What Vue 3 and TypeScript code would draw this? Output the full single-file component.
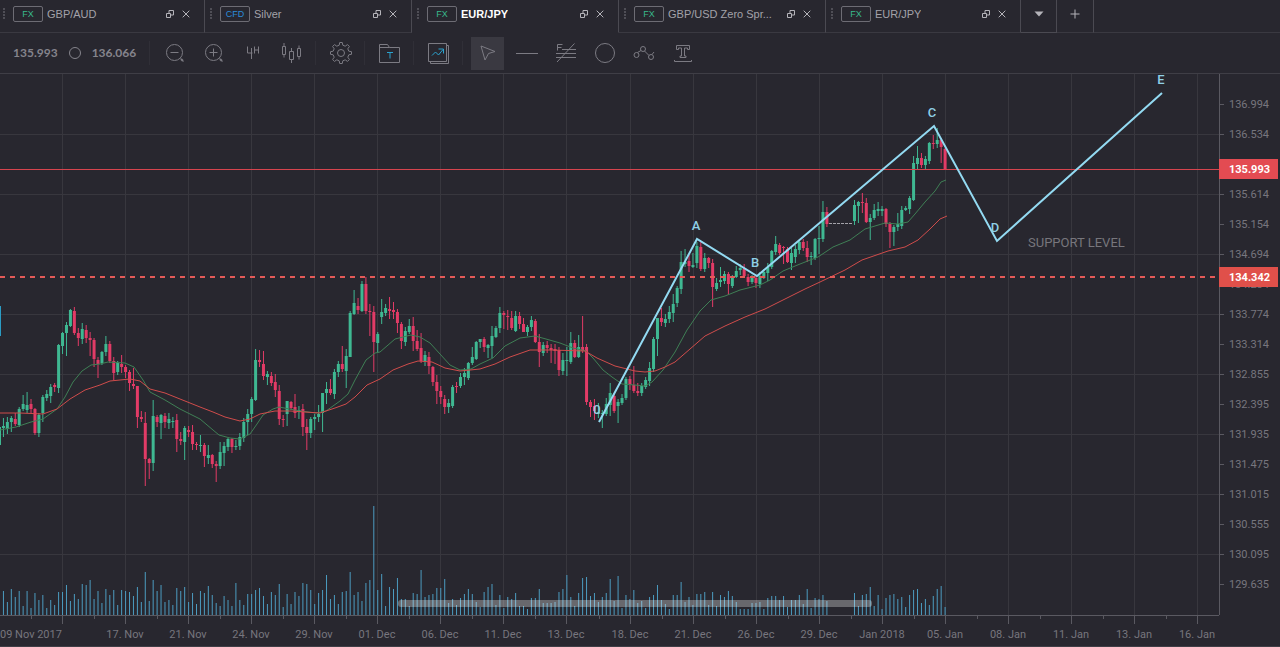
<script setup lang="ts">
import { ref } from 'vue'

interface Tab {
  kind: 'FX' | 'CFD'
  title: string
}

interface Candle {
  x: number
  high: number
  top: number
  bottom: number
  low: number
  up: boolean
}

const tabs: Tab[] = [
  { kind: 'FX', title: 'GBP/AUD' },
  { kind: 'CFD', title: 'Silver' },
  { kind: 'FX', title: 'EUR/JPY' },
  { kind: 'FX', title: 'GBP/USD Zero Spr...' },
  { kind: 'FX', title: 'EUR/JPY' },
]
const activeTab = ref(2)
const activeTool = ref('pointer')

// Distance between two bars of the series, in chart units
const STEP = 3.94
const BASE = 615
const AXIS = 1219

const barX = (i: number): number => i * STEP - 0.5

// One bar per entry: direction, then high, body top, body bottom, low
const firstBars = `G425,427,445,447 G418,426,428,437 G417,422,429,434 G416,418,422,432 R413,419,424,426 G407,409,425,427 G395,404,409,411 G392,405,410,413 R399,404,409,413 R408,409,433,435
G413,415,433,437 G395,397,413,422 G390,394,398,401 G384,387,396,403 R383,385,387,392 G344,345,388,393 G332,333,346,354 G322,325,333,356 G309,310,326,327 R307,311,333,335
R328,333,338,346 G323,329,339,344 R325,330,338,343 R332,338,340,356 R338,340,359,367 R357,360,364,378 G351,352,363,365 G336,344,352,356 R341,344,361,363 R357,361,373,380
G361,363,372,375 R355,364,367,373 R365,367,372,378 R370,372,383,391 R368,384,386,389 R386,386,417,428 R411,417,419,422 R412,423,459,486 R458,459,463,479 G400,416,463,471
R415,417,422,427 G414,415,423,439 R413,416,422,428 G413,419,423,429 G417,421,422,428 R414,420,439,452 R432,439,441,445 G426,428,442,460 R426,430,432,437 R425,432,444,450
R442,444,445,450 G435,445,446,452 R443,445,456,467 G445,455,458,464 R454,455,464,468 R461,464,466,482 G442,452,466,469 G442,446,453,466 G438,439,447,451 R438,439,447,453
G440,446,447,450 G433,437,446,450 G418,422,438,442 G409,414,422,435 G397,399,414,422 G349,360,400,401 R350,360,362,367 R351,364,376,380 G371,374,377,385 R372,376,383,386
R374,382,390,397 R385,391,419,425 R415,419,420,427 G401,401,414,426 R401,402,408,410 R394,407,413,418 G406,410,412,419 R404,409,427,436 R419,427,433,450 G417,419,433,438
G414,417,419,430 G405,414,417,422 G393,393,413,432 G382,389,393,404 R379,389,393,395 G369,372,394,399 G361,364,372,377 R346,364,369,372 G349,356,371,388 G311,313,357,357
G290,303,314,315 R298,306,310,314 G281,284,311,312 R277,284,311,314 R304,311,312,336 R306,312,342,372 G332,334,343,353 G299,312,317,324 G304,308,313,316 R297,309,311,319
R302,310,312,319 R309,312,323,333 R322,324,341,349 G327,331,342,346 G319,326,332,334 R317,326,341,351 R330,341,349,351 R333,348,361,363 G351,355,362,366 R352,357,366,374
R366,367,382,386 R375,382,391,404 R386,391,397,404 R395,399,407,414 G399,403,407,413 G385,387,406,408 R382,386,387,393 G373,377,386,388 G368,373,377,385 G362,363,378,380
G347,357,363,365 G341,342,359,360 G339,339,342,348 R337,339,347,352 G344,345,348,358 G326,336,346,358 G326,328,337,338 G307,313,328,333 R311,313,315,329 R310,316,317,330
R311,318,328,330 G311,316,331,332 R312,316,324,329 R318,324,332,332 G325,327,332,336 G316,320,327,331 R319,321,342,343 R334,342,352,367 G342,345,353,356 R341,345,348,353
R344,348,350,363 R344,349,351,364 R347,350,370,376 G353,360,371,375 G347,360,361,376 G332,343,362,364 R340,343,357,358 G335,347,357,358 R316,347,351,353 R344,347,402,405
R400,402,407,417 R399,406,411,420 G403,412,414,418 G410,413,414,428 G398,404,414,416 G383,393,405,416 R393,396,411,413 G399,402,406,423 G394,398,403,405 G377,379,398,400
R376,379,385,390 R366,385,391,393 R383,391,393,396 G383,386,393,396 G377,380,387,389 G362,368,381,386 G337,339,369,372 G318,318,339,356 R308,318,322,326 G314,319,323,327
G306,312,319,323 G294,304,313,322 G286,288,303,307 G251,262,289,294 G249,262,264,267 R255,261,266,272 G253,265,267,268 G242,246,263,268 R241,247,269,271 G253,258,269,272
R257,258,263,268 R259,263,287,307 G278,283,289,291 G267,280,282,287 G271,274,281,284 R272,274,284,295 G275,278,286,288 G266,271,277,278 G264,268,270,275 R264,269,276,277
R274,277,282,286 G275,278,282,284 R276,278,283,288 G272,276,284,288 G269,272,278,279 G263,267,273,281 G250,251,267,269 G236,244,252,255 R243,245,253,255 R246,247,248,264
R247,249,262,263 G248,253,263,270 G245,249,257,263 G240,242,250,254 R239,242,248,251 R241,248,257,262 G252,256,257,265 G238,239,258,260 G226,238,239,254 G201,212,239,242
R207,212,224,227`

const holidayResume = 217
const lastBars = `G200,205,221,225 G201,202,206,223 R193,202,203,213 R198,203,222,223 G214,218,222,240 G204,210,218,220 G202,209,211,216 G206,209,211,216 R208,209,224,227 R222,224,232,248
G225,227,232,246 G213,224,227,231 G206,210,226,229 G206,208,210,211 G196,198,209,214 G156,163,200,201 G146,158,164,169 R153,158,165,168 G156,159,165,170 G142,143,161,164
R135,143,144,149 G128,140,144,148 R138,140,147,163 R148,149,169,170`

function parseBars(source: string, start: number): Candle[] {
  return source
    .trim()
    .split(/\s+/)
    .map((entry, i) => {
      const [high, top, bottom, low] = entry.slice(1).split(',').map(Number)
      return { x: barX(start + i), high, top, bottom, low, up: entry[0] === 'G' }
    })
}

const candles: Candle[] = [...parseBars(firstBars, 0), ...parseBars(lastBars, holidayResume)]

const volumeFirst: number[] = [
  24, 13, 26, 18, 24, 9, 24, 7, 22, 15, 20, 7, 15, 10, 23, 23, 30, 14, 21, 16, 31, 30, 35, 16, 24, 12, 26, 20, 25, 10,
  25, 24, 23, 19, 28, 13, 43, 14, 35, 24, 30, 13, 15, 10, 27, 24, 28, 13, 22, 11, 24, 22, 29, 20, 12, 9, 19, 15, 9, 32,
  15, 10, 21, 21, 25, 27, 19, 11, 23, 20, 31, 8, 21, 11, 23, 19, 32, 31, 25, 11, 22, 25, 40, 16, 20, 11, 23, 24, 43, 20,
  23, 14, 32, 35, 109, 25, 41, 9, 28, 26, 37, 16, 16, 9, 22, 21, 45, 18, 20, 21, 27, 27, 36, 12, 16, 10, 17, 21, 26, 21,
  13, 8, 23, 28, 31, 10, 20, 7, 18, 16, 22, 9, 9, 6, 17, 17, 26, 12, 12, 12, 13, 23, 26, 40, 18, 9, 22, 37, 38, 19,
  22, 13, 18, 22, 36, 14, 39, 7, 20, 16, 25, 12, 14, 7, 18, 20, 30, 15, 11, 6, 20, 20, 33, 13, 18, 10, 21, 21, 23, 10,
  23, 9, 20, 18, 24, 19, 13, 6, 6, 6, 12, 12, 13, 6, 17, 19, 19, 15, 19, 8, 15, 15, 20, 11, 26, 7, 17, 16, 20, 14,
]
const volumeLast: number[] = [
  22, 9, 20, 21, 28, 9, 20, 6, 17, 20, 21, 16, 18, 8, 20, 25, 26, 12, 16, 10, 19, 26, 29, 8,
]
const volumes = [
  ...volumeFirst.map((h, i) => ({ x: barX(i + 1), h })),
  ...volumeLast.map((h, i) => ({ x: barX(i + holidayResume), h })),
]

const fastAverage =
  '0,430 16,427 31,422 43,419 57,409 65,397 73,382 82,371 91,365 100,364 108,362 125,363 134,367 143,380 150,392 165,400 180,409 200,419 213,430 219,435 230,438 240,439 250,434 257,424 263,415 273,409 279,407 300,411 316,413 326,411 340,401 348,394 355,380 366,360 375,353 380,352 395,339 403,337 411,335 420,337 430,343 440,354 450,365 460,370 471,369 480,364 493,358 505,346 520,338 535,336 546,339 560,343 573,348 586,351 593,358 603,370 612,377 622,384 635,385 645,386 652,382 663,370 675,352 687,330 700,311 711,300 725,296 740,290 760,285 770,280 783,271 800,264 818,257 833,247 850,240 865,229 885,223 898,224 908,222 915,214 925,202 935,191 941,182 946,180'
const slowAverage =
  '0,413 20,413 43,414 57,409 70,399 85,390 100,385 110,381 130,379 140,381 150,389 165,393 180,399 200,407 213,412 225,417 240,421 250,419 260,414 275,411 290,411 320,413 335,408 346,404 355,397 367,385 380,379 393,370 408,364 418,361 432,362 445,368 460,371 480,369 495,364 510,357 530,350 550,350 585,351 597,358 615,366 635,371 645,372 655,371 665,367 675,362 690,349 705,336 725,326 745,317 765,309 785,299 805,289 820,282 845,270 862,260 888,251 905,247 918,240 930,229 940,219 947,216'

const priceLabels = [
  { text: '136.994', y: 104 },
  { text: '136.534', y: 134 },
  { text: '135.614', y: 194 },
  { text: '135.154', y: 224 },
  { text: '134.694', y: 254 },
  { text: '134.234', y: 284 },
  { text: '133.774', y: 314 },
  { text: '133.314', y: 344 },
  { text: '132.855', y: 374 },
  { text: '132.395', y: 404 },
  { text: '131.935', y: 434 },
  { text: '131.475', y: 464 },
  { text: '131.015', y: 494 },
  { text: '130.555', y: 524 },
  { text: '130.095', y: 554 },
  { text: '129.635', y: 584 },
]
const rows = [134, 194, 254, 314, 374, 434, 494, 554]

const dates = [
  '17. Nov', '21. Nov', '24. Nov', '29. Nov', '01. Dec', '06. Dec', '11. Dec', '13. Dec', '18. Dec',
  '21. Dec', '26. Dec', '29. Dec', 'Jan 2018', '05. Jan', '08. Jan', '11. Jan', '13. Jan', '16. Jan',
]
const columnX = (i: number): number => 62 + Math.round(i * 63.06)
const columns = Array.from({ length: 19 }, (_, i) => columnX(i))
const minorTicks = Array.from({ length: 19 }, (_, i) => columnX(i) - 31)

const wave = '599,422 697,239 757,276 934,126 997,241 1162,93'
const waveLabels = [
  { text: '0', x: 597, y: 414 },
  { text: 'A', x: 696, y: 230 },
  { text: 'B', x: 755, y: 267 },
  { text: 'C', x: 932, y: 117 },
  { text: 'D', x: 995, y: 232 },
  { text: 'E', x: 1161, y: 84 },
]
</script>

<template>
  <main class="terminal">
    <header class="tabs">
      <div
        v-for="(tab, i) in tabs"
        :key="i"
        class="tab"
        :class="{ active: i === activeTab, first: i === 0, last: i === tabs.length - 1 }"
      >
        <svg class="grip" width="4" height="12" viewBox="0 0 4 12" aria-hidden="true">
          <path d="M1 1h2M1 4h2M1 7h2M1 10h2" />
        </svg>
        <button class="label" type="button" @click="activeTab = i">
          <span class="badge" :class="{ cfd: tab.kind === 'CFD' }">{{ tab.kind }}</span>
          <span class="title">{{ tab.title }}</span>
        </button>
        <button class="mini" type="button" aria-label="Detach">
          <svg width="8" height="8" viewBox="0 0 8 8"><path d="M.5 3.500h4v4h-4zM3 3V.5h4.500V5H5" /></svg>
        </button>
        <button class="mini" type="button" aria-label="Close">
          <svg width="8" height="8" viewBox="0 0 8 8"><path d="M.7.7l6.600 6.600M7.300.7L.7 7.300" /></svg>
        </button>
      </div>
      <button class="square boxed" type="button" aria-label="All charts">
        <svg width="10" height="6" viewBox="0 0 10 6"><path class="solid" d="M.5.5h9L5 5.500z" /></svg>
      </button>
      <button class="square" type="button" aria-label="Add chart">
        <svg width="10" height="10" viewBox="0 0 10 10"><path d="M5 .5v9M.5 5h9" /></svg>
      </button>
      <div class="rest"></div>
    </header>

    <nav class="toolbar">
      <div class="quote">
        <span>135.993</span>
        <svg width="14" height="14" viewBox="0 0 14 14" aria-hidden="true"><circle cx="7" cy="7" r="5.500" /></svg>
        <span>136.066</span>
      </div>
      <i class="sep"></i>
      <button class="tool" type="button" aria-label="Zoom out">
        <svg width="24" height="24" viewBox="0 0 24 24"><circle cx="11.500" cy="11.500" r="8" /><path d="M7.500 11.500h8M17.500 17.500l3 3" /><path class="thick" d="M18 18l2 2" /></svg>
      </button>
      <button class="tool" type="button" aria-label="Zoom in">
        <svg width="24" height="24" viewBox="0 0 24 24"><circle cx="11.500" cy="11.500" r="8" /><path d="M7.500 11.500h8M11.500 7.500v8M17.500 17.500l3 3" /><path class="thick" d="M18 18l2 2" /></svg>
      </button>
      <button class="tool" type="button" aria-label="4 hour interval">
        <svg width="24" height="24" viewBox="0 0 24 24"><path d="M6.500 5.500v6.500h5M10.500 7v11M13.500 5.500v7M17.500 5.500v7M13.500 9h4" /></svg>
      </button>
      <button class="tool" type="button" aria-label="Chart type">
        <svg width="24" height="24" viewBox="0 0 24 24"><path d="M2.500 5.500h3v8h-3zM4 2v3.500M4 13.500v3M9.500 10.500h4v8h-4zM11.500 7v3.500M11.500 18.500v3.500M17.500 7.500h3v8h-3zM19 4.500v3M19 15.500v3" /></svg>
      </button>
      <i class="sep"></i>
      <button class="tool" type="button" aria-label="Settings">
        <svg width="24" height="24" viewBox="0 0 24 24"><circle cx="12" cy="12" r="3.500" /><path d="M10.200 4.200 10.700 1.500h2.600l.5 2.700 2.400 1 2.300-1.600 1.900 1.900-1.600 2.300 1 2.400 2.700.5v2.600l-2.700.5-1 2.400 1.600 2.300-1.900 1.900-2.300-1.600-2.400 1-.5 2.700h-2.600l-.5-2.700-2.400-1-2.300 1.600-1.900-1.900 1.600-2.300-1-2.400-2.700-.5v-2.600l2.700-.5 1-2.400-1.600-2.300 1.900-1.900 2.300 1.600z" /></svg>
      </button>
      <i class="sep"></i>
      <button class="tool" type="button" aria-label="Templates">
        <svg width="24" height="24" viewBox="0 0 24 24"><path d="M1.500 21.500v-18h8l2 3h10v15zM1.500 6.500h10" /><path class="accent" d="M9 11.500h6M12 11.500v6" /></svg>
      </button>
      <i class="sep"></i>
      <button class="tool" type="button" aria-label="Indicators">
        <svg width="24" height="24" viewBox="0 0 24 24"><path d="M1.500 2.500h18v18h-18zM19.500 4.500h2v18h-18v-2" /><path class="accent" d="M5 14.500l3.500-3.500 3 3 4.500-5.500M11.500 8h5v4.500" /></svg>
      </button>
      <i class="sep"></i>
      <button class="tool" type="button" aria-label="Pointer" :class="{ on: activeTool === 'pointer' }" @click="activeTool = 'pointer'">
        <svg width="24" height="24" viewBox="0 0 24 24"><path d="M5 5l14 5.500-6.500 2-3.500 6.500z" /></svg>
      </button>
      <button class="tool" type="button" aria-label="Line" :class="{ on: activeTool === 'line' }" @click="activeTool = 'line'">
        <svg width="24" height="24" viewBox="0 0 24 24"><path d="M1 12.500h22" /></svg>
      </button>
      <button class="tool" type="button" aria-label="Fibonacci" :class="{ on: activeTool === 'fibonacci' }" @click="activeTool = 'fibonacci'">
        <svg width="24" height="24" viewBox="0 0 24 24"><path d="M3.500 9.500v-6h5M3.500 6.500h4M8 8.500h14M2 12.500h20M2 16.500h20M3 21L20.500 2.500" /></svg>
      </button>
      <button class="tool" type="button" aria-label="Ellipse" :class="{ on: activeTool === 'ellipse' }" @click="activeTool = 'ellipse'">
        <svg width="24" height="24" viewBox="0 0 24 24"><circle cx="12" cy="12" r="9.500" /></svg>
      </button>
      <button class="tool" type="button" aria-label="Elliott wave" :class="{ on: activeTool === 'wave' }" @click="activeTool = 'wave'">
        <svg width="24" height="24" viewBox="0 0 24 24"><circle cx="4.500" cy="14" r="2.500" /><circle cx="11" cy="8" r="2.500" /><circle cx="19" cy="16" r="2.500" /><path d="M5.500 11.500l3.500-2M12.500 10l4.500 4.500M20 13.500l2-2.500" /></svg>
      </button>
      <button class="tool" type="button" aria-label="Text" :class="{ on: activeTool === 'text' }" @click="activeTool = 'text'">
        <svg width="24" height="24" viewBox="0 0 24 24"><path d="M5.500 4.500h13v4h-2v-1.500h-3v8h1.500v1.500h-6v-1.500h1.500V7h-3v1.500h-2zM3.500 19v1.500h17V19" /></svg>
      </button>
    </nav>

    <svg class="chart" viewBox="0 73 1280 574" role="img" aria-label="EUR/JPY 4 hour candlestick chart">
      <g class="grid">
        <path v-for="x in columns" :key="'c' + x" :d="`M${x + 0.5} 74V${BASE}`" />
        <path v-for="y in rows" :key="'r' + y" :d="`M0 ${y + 0.5}H${AXIS}`" />
      </g>
      <path class="edge" d="M0 73.500H1280M0 646.500H1280" />

      <g class="volume">
        <path v-for="v in volumes" :key="v.x" :d="`M${v.x} ${BASE}v${-v.h}`" />
      </g>

      <g v-for="c in candles" :key="c.x" :class="c.up ? 'up' : 'down'">
        <path :d="`M${c.x} ${c.high}V${c.low}`" />
        <rect :x="c.x - 1.5" :y="c.top" width="3" :height="Math.max(1, c.bottom - c.top)" />
      </g>
      <path class="closed" d="M829 223.500H853" />

      <polyline class="fast" :points="fastAverage" />
      <polyline class="slow" :points="slowAverage" />

      <path class="price-line" d="M0 169.500H1219" />
      <path class="support" d="M0 277H1219" />
      <rect class="marker" x="0" y="306" width="1" height="30" />

      <polyline class="wave" :points="wave" />
      <text v-for="w in waveLabels" :key="w.text" class="wave-label" :x="w.x" :y="w.y">{{ w.text }}</text>
      <text class="note" x="1028" y="247">SUPPORT LEVEL</text>

      <path class="axis" :d="`M${AXIS + 0.5} 74V${BASE}M0 ${BASE + 0.5}H${AXIS}`" />
      <g class="axis">
        <path v-for="p in priceLabels" :key="p.text" :d="`M${AXIS} ${p.y + 0.5}h5`" />
        <path v-for="x in columns" :key="'t' + x" :d="`M${x + 0.5} ${BASE}v9`" />
        <path v-for="x in minorTicks" :key="'m' + x" :d="`M${x + 0.5} ${BASE}v4`" />
      </g>
      <rect class="scroll" x="398" y="600" width="474" height="7" rx="3" />

      <text v-for="p in priceLabels" :key="'l' + p.text" class="tick" x="1229" :y="p.y + 4">{{ p.text }}</text>
      <text class="tick" x="0" y="638">09 Nov 2017</text>
      <text v-for="(d, i) in dates" :key="d" class="tick mid" :x="columnX(i + 1)" y="638">{{ d }}</text>

      <rect class="tag" x="1219" y="159" width="59" height="20" />
      <text class="tag-text" x="1229" y="173">135.993</text>
      <rect class="tag low" x="1219" y="267" width="59" height="20" />
      <text class="tag-text" x="1229" y="281">134.342</text>
    </svg>
  </main>
</template>

<style>
body {
  margin: 0;
  background: #28272f;
}
</style>

<style scoped>
.terminal {
  min-height: 100vh;
  background: #28272f;
  color: #a3a2a9;
  font-family: 'Liberation Sans', Arial, sans-serif;
  overflow: hidden;
}

button {
  margin: 0;
  padding: 0;
  border: 0;
  background: none;
  color: inherit;
  font: inherit;
  cursor: pointer;
}

button svg {
  display: block;
}

path,
circle,
polyline {
  fill: none;
  stroke-width: 1;
}

.tabs {
  display: flex;
  height: 33px;
}

.tab,
.square,
.rest {
  box-sizing: border-box;
  border-bottom: 1px solid #3a3941;
}

.tab {
  display: flex;
  align-items: center;
  flex: 0 1 207px;
  min-width: 0;
  padding: 0 14px 4px 4px;
  border-right: 1px solid #4b4a52;
}

.tab.first {
  flex-basis: 205px;
  padding-left: 2px;
}

.tab.last {
  flex-basis: 195px;
}

.tab.active {
  border-bottom-color: transparent;
}

.grip {
  flex: none;
  margin-right: 7px;
}

.grip path {
  stroke: #77767e;
}

.label {
  display: flex;
  align-items: center;
  flex: 1;
  gap: 4px;
  min-width: 0;
  font-size: 11px;
  line-height: 16px;
  text-align: left;
}

.badge {
  box-sizing: border-box;
  flex: none;
  width: 30px;
  height: 16px;
  border: 1px solid #6d6c74;
  border-radius: 2px;
  color: #38b98c;
  font-size: 9px;
  line-height: 15px;
  text-align: center;
}

.badge.cfd {
  color: #2b8bd8;
}

.title {
  overflow: hidden;
  white-space: nowrap;
}

.active .title {
  color: #ffffff;
  font-weight: 700;
}

.mini {
  flex: none;
  margin-left: 8px;
}

.mini path,
.square path {
  stroke: #b5b4ba;
}

.square {
  display: flex;
  flex: none;
  align-items: center;
  justify-content: center;
  width: 37px;
  padding-bottom: 5px;
  border-right: 1px solid #4b4a52;
}

.square.boxed {
  width: 36px;
  border-bottom-color: #4b4a52;
}

.square .solid {
  fill: #b5b4ba;
  stroke: none;
}

.rest {
  flex: 1;
}

.toolbar {
  display: flex;
  align-items: center;
  gap: 6px;
  height: 40px;
  padding-left: 13px;
}

.quote {
  display: flex;
  align-items: center;
  gap: 10px;
  margin-right: 6px;
  color: #85848c;
  font-family: Lato, sans-serif;
  font-size: 12px;
  font-weight: 700;
  line-height: 16px;
}

.quote circle {
  stroke: #85848c;
}

.sep {
  width: 1px;
  height: 24px;
  margin: 0 2px 0 1px;
  background: #302f37;
}

.tool {
  display: flex;
  flex: none;
  align-items: center;
  justify-content: center;
  width: 33px;
  height: 33px;
}

.tool.on {
  background: #3a3941;
}

.tool path,
.tool circle {
  stroke: #7c7b83;
}

.tool .thick {
  stroke-width: 2;
}

.tool .accent {
  stroke: #2ba3cf;
}

.chart {
  display: block;
  width: 100%;
  height: auto;
}

.grid path {
  stroke: #38373e;
}

.edge {
  stroke: #3f3e46;
}

.volume path {
  stroke: #4c9cc0;
}

.up path {
  stroke: #3fb892;
}

.up rect {
  fill: #3fb892;
}

.down path {
  stroke: #e23b66;
}

.down rect {
  fill: #e23b66;
}

.closed {
  stroke: #a3a2a9;
  stroke-dasharray: 3 1;
}

.fast {
  stroke: #3f7f55;
}

.slow {
  stroke: #cf4c4b;
}

.price-line {
  stroke: #d6444e;
}

.support {
  stroke: #e35a58;
  stroke-width: 2;
  stroke-dasharray: 5 5;
}

.marker {
  fill: #2b9cc4;
}

.wave {
  stroke: #93daf2;
  stroke-width: 2;
}

.wave-label {
  fill: #8fd0e6;
  font: 500 13px Roboto, sans-serif;
  text-anchor: middle;
}

.note {
  fill: #77767c;
  font: 13px Roboto, sans-serif;
}

.axis,
.axis path {
  stroke: #5a5961;
}

.scroll {
  fill: #ffffff;
  fill-opacity: 0.3;
}

.tick {
  fill: #77767e;
  font: 11px Roboto, sans-serif;
}

.mid {
  text-anchor: middle;
}

.tag {
  fill: #e34b52;
}

.tag.low {
  fill: #e0504a;
}

.tag-text {
  fill: #ffffff;
  font: 700 11px Roboto, sans-serif;
}
</style>
